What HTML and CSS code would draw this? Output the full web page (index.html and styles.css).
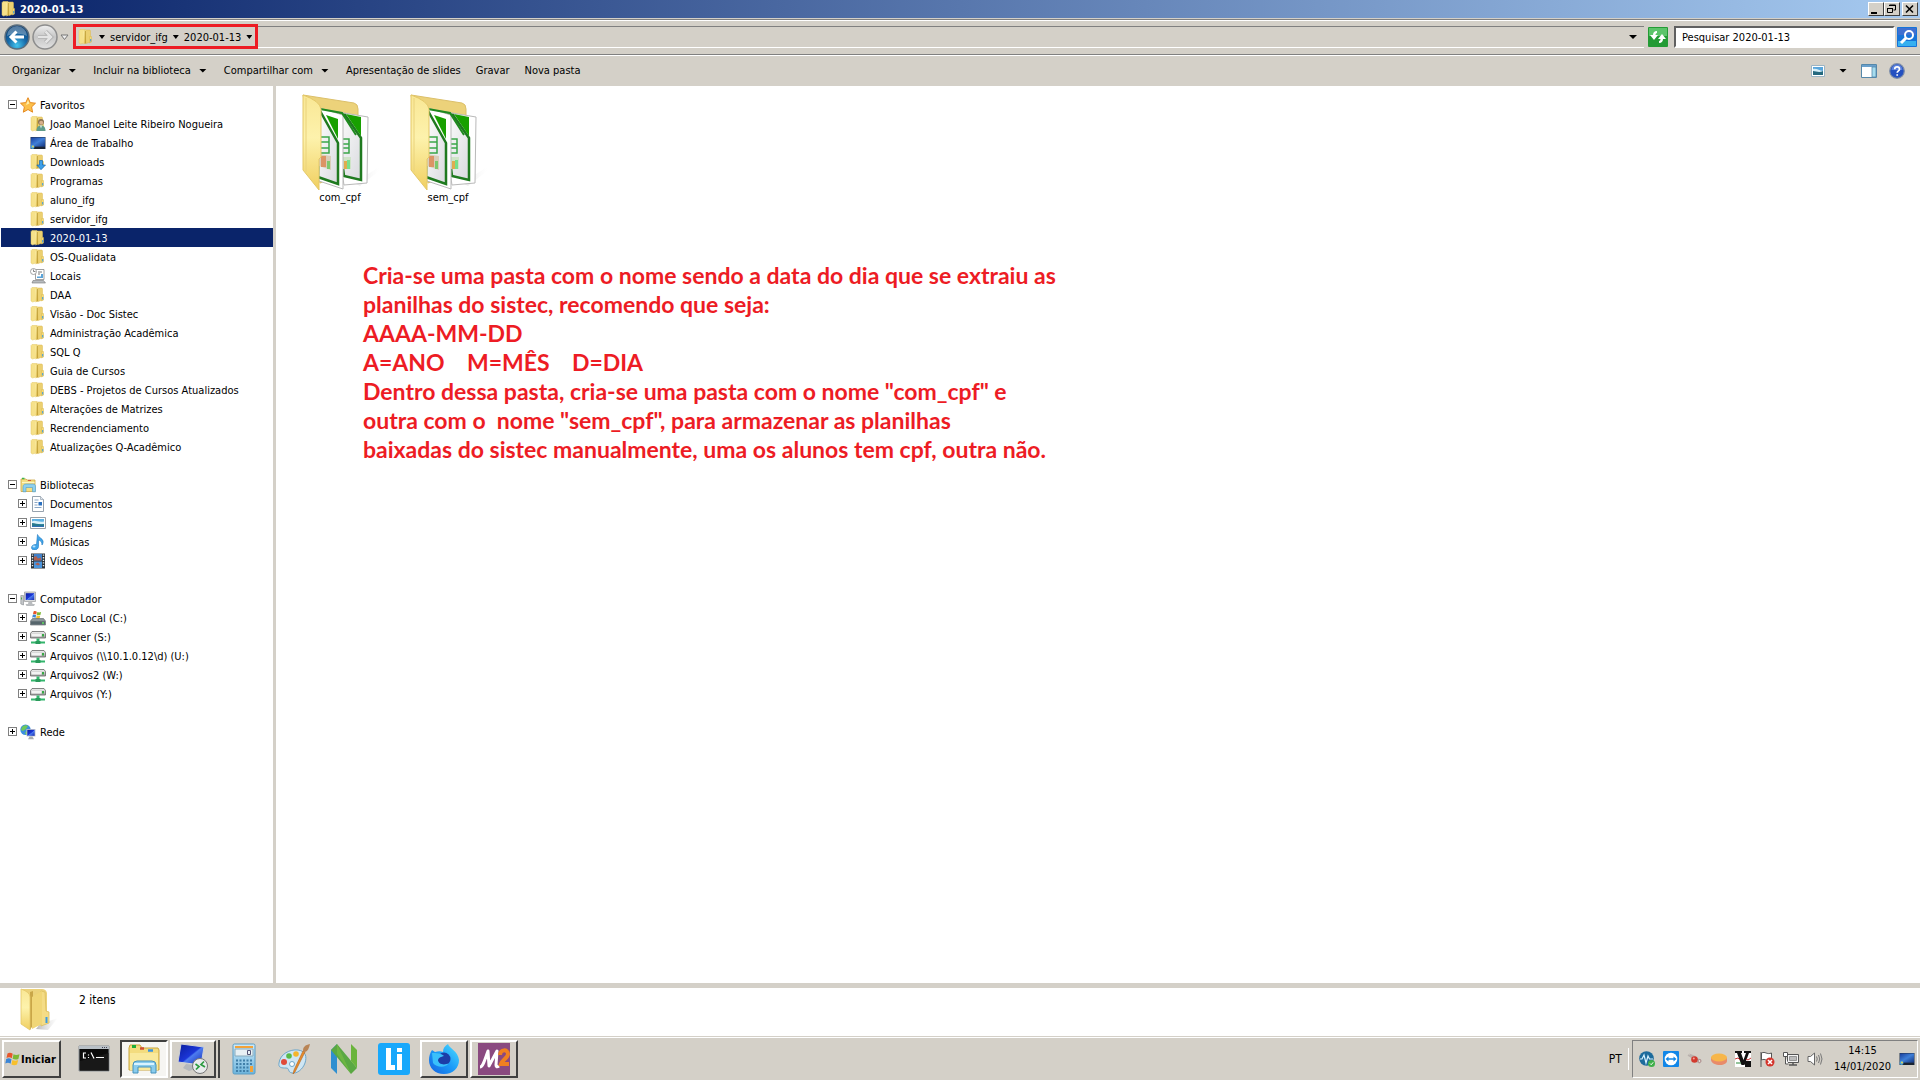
FILE: index.html
```
<!DOCTYPE html>
<html lang="pt-BR">
<head>
<meta charset="utf-8">
<title>2020-01-13</title>
<link rel="stylesheet" href="styles.css">
</head>
<body>
<svg class="sprite" aria-hidden="true">
  <defs>
    <linearGradient id="gold" x1="0" y1="0" x2="1" y2="1"><stop offset="0" stop-color="#fdf3b4"/><stop offset="1" stop-color="#e2b93d"/></linearGradient>
    <linearGradient id="flap" x1="0" y1="0" x2="0" y2="1"><stop offset="0" stop-color="#f9e795"/><stop offset=".45" stop-color="#fdf2ac"/><stop offset="1" stop-color="#f0cf60"/></linearGradient>
    <linearGradient id="screen" x1="0" y1="0" x2="1" y2="1"><stop offset="0" stop-color="#1a3f9c"/><stop offset=".5" stop-color="#3f7fd8"/><stop offset="1" stop-color="#15357f"/></linearGradient>
    <linearGradient id="deep" x1="0" y1="0" x2="1" y2="1"><stop offset="0" stop-color="#0a1c9a"/><stop offset=".5" stop-color="#1b36d8"/><stop offset=".55" stop-color="#4c7cf0"/><stop offset="1" stop-color="#1427b0"/></linearGradient>
    <linearGradient id="metal" x1="0" y1="0" x2="0" y2="1"><stop offset="0" stop-color="#f4f4f4"/><stop offset="1" stop-color="#9a9a9a"/></linearGradient>
    <linearGradient id="paper" x1="0" y1="0" x2="1" y2="1"><stop offset="0" stop-color="#ffffff"/><stop offset="1" stop-color="#d9dade"/></linearGradient>
    <linearGradient id="shade" x1="0" y1="0" x2="1" y2="0"><stop offset="0" stop-color="#999" stop-opacity=".7"/><stop offset="1" stop-color="#ccc" stop-opacity="0"/></linearGradient>
    <radialGradient id="bluebtn" cx=".5" cy=".85" r=".8"><stop offset="0" stop-color="#43c4ee"/><stop offset=".5" stop-color="#1769a8"/><stop offset="1" stop-color="#0c3f73"/></radialGradient>
    <linearGradient id="greybtn" x1="0" y1="0" x2="0" y2="1"><stop offset="0" stop-color="#f0f0f0"/><stop offset=".5" stop-color="#c6c6c6"/><stop offset="1" stop-color="#e2e2e2"/></linearGradient>
    <linearGradient id="aqua" x1="0" y1="0" x2="0" y2="1"><stop offset="0" stop-color="#cdeafa"/><stop offset="1" stop-color="#6db4dc"/></linearGradient>
    <linearGradient id="fox" x1="1" y1="0" x2="0" y2="1"><stop offset="0" stop-color="#4fe0ff"/><stop offset=".5" stop-color="#1b9cf8"/><stop offset="1" stop-color="#1560e0"/></linearGradient>
  </defs>
  <symbol id="i-folder" viewBox="0 0 16 16">
    <path d="M1 1.500 2 .5h5l.5 13-5 1.500L1 14z" fill="#f6e18a" stroke="#e3c765" stroke-width=".5"/>
    <path d="M7 1h5l.5 1v11l-4.500 1.500z" fill="#ecd070" stroke="#dcbb55" stroke-width=".5"/>
    <path d="M5.500 2.500 8 1v13l-2.500 1.500z" fill="url(#gold)"/>
    <path d="M7.300 2v12.500" stroke="#b9972f" stroke-width=".9"/>
    <path d="M11.500 7.500h2v5.500l-2 1z" fill="#f4d975" stroke="#d9b850" stroke-width=".5"/>
    <path d="M12.700 10v2.500" stroke="#3b9be0" stroke-width="1"/>
  </symbol>
  <symbol id="i-user" viewBox="0 0 16 16">
    <use href="#i-folder"/>
    <circle cx="11" cy="6" r="3" fill="#8d7350"/><circle cx="11.200" cy="6.800" r="2" fill="#d8b08c"/>
    <path d="M6.500 15c0-4 2-5.500 4.500-5.500s4.500 1.500 4.500 5.500z" fill="#5f9c8a"/><path d="M10 9.500h2l-1 3z" fill="#e8f0ee"/>
  </symbol>
  <symbol id="i-desk" viewBox="0 0 16 16">
    <path d="M.5 2h15v12H.5z" fill="#23344f"/><path d="M1 2.500h14v9H1z" fill="url(#screen)"/>
    <path d="M1 12h14v2H1z" fill="#1a2433"/><circle cx="2.500" cy="12" r="2" fill="#48a3dd"/><circle cx="3" cy="11.500" r=".9" fill="#f2d64b"/>
  </symbol>
  <symbol id="i-down" viewBox="0 0 16 16">
    <use href="#i-folder"/>
    <path d="M9.500 6.500h3V11H15.500L11 15.700 6.800 11h2.700z" fill="#3da0ea" stroke="#1767ad" stroke-width=".7"/>
  </symbol>
  <symbol id="i-places" viewBox="0 0 16 16">
    <path d="M5.500 1.500H14v10H5.500z" fill="#fff" stroke="#888" stroke-width=".8"/><path d="M7 8.500h4V6h2v4H7z" fill="#5aa3d8"/>
    <path d="M8 4h4M8 6h2" stroke="#777"/><circle cx="3.500" cy="3.500" r="3" fill="#fff" stroke="#999" stroke-width=".9"/><path d="M3.500 1.500v2h2" stroke="#555" stroke-width=".7" fill="none"/>
    <path d="M3 12.500h10.500l2 2.500H2z" fill="#b8bcbf" stroke="#777" stroke-width=".6"/>
  </symbol>
  <symbol id="i-star" viewBox="0 0 16 16">
    <path d="M8 .7 10.200 5.600 15.500 6.200 11.600 9.900 12.600 15.200 8 12.500 3.300 15.200 4.400 9.900.5 6.200 5.800 5.600z" fill="#fcc04a" stroke="#e58a22" stroke-width="1"/>
    <path d="M8 3 9.300 6.500 6 8z" fill="#fff0b0"/>
  </symbol>
  <symbol id="i-lib" viewBox="0 0 16 16">
    <path d="M1 2h5l1 1h8v11.500H1z" fill="#f5df85" stroke="#cda744" stroke-width=".8"/><path d="M2 1.500h2.500" stroke="#3cb54a" stroke-width="1.500"/><path d="M8 3.500h3" stroke="#d2553c"/>
    <path d="M2 5.500h12.500" stroke="#fff6c4"/><path d="M3 14.800V10c0-2 1-3 3-3h7c2 0 2.500 1 2.500 3v4.800h-3V10.500H6v4.300z" fill="#8fd0ee" stroke="#4d9cc8" stroke-width=".6"/>
  </symbol>
  <symbol id="i-doc" viewBox="0 0 16 16">
    <path d="M2.500.5h8l3 3v12h-11z" fill="#fff" stroke="#8a97a5" stroke-width=".9"/><path d="M10.500.5v3h3" fill="#dfe6ee" stroke="#8a97a5" stroke-width=".6"/>
    <path d="M4.500 4h4M4.500 6.500h3M4.500 9h3M4.500 11.500h7" stroke="#6c8fb5" stroke-width=".8"/><path d="M8.500 6H12v3.500H8.500z" fill="#2a70c0"/>
  </symbol>
  <symbol id="i-img" viewBox="0 0 16 16">
    <path d="M.5 2.500h15v11H.5z" fill="#fff" stroke="#8c949c" stroke-width=".9"/><path d="M2 4h12v8H2z" fill="#5cb0e2"/>
    <path d="M2 6.500c3-2 6 1 12 0v2.500H2z" fill="#d9f0f8"/><path d="M2 8c4 0 6 2 12 1v3H2z" fill="#27798f"/><path d="M2 11h12v1H2z" fill="#2f6fb4"/>
  </symbol>
  <symbol id="i-music" viewBox="0 0 16 16">
    <path d="M7.500.5c.5 2.500 5 4 5.500 6.500.3 1.500 0 2.500-1 4 .2-3-1.500-4.500-3.500-5v6.500c0 2-2 3.500-4 3.500S1.500 15 1.500 13.500c0-2 2.500-3.500 5-3z" fill="#3fa5ea" stroke="#1f77bf" stroke-width=".6"/>
    <ellipse cx="4" cy="12.600" rx="1.500" ry="1" fill="#b7e0fa"/>
  </symbol>
  <symbol id="i-video" viewBox="0 0 16 16">
    <path d="M1 .5h14v15H1z" fill="#2b3238"/><path d="M4 1h8v6.500H4z" fill="#4180c9"/><path d="M4 8.500h8V15H4z" fill="#4a95dd"/>
    <path d="M4 4l2-1 2 2.500 3-1v3H4zM5 11l3-1.500 2 2-2 1z" fill="#b0604f"/><path d="M2.500 1.500v13M13.500 1.500v13" stroke="#e8eef2" stroke-width="1.400" stroke-dasharray="1.300 1.300"/>
  </symbol>
  <symbol id="i-pc" viewBox="0 0 16 16">
    <path d="M.8 4.500h2.700V14L.8 13z" fill="#c3c6c9" stroke="#85898d" stroke-width=".6"/><path d="M1.500 6.500v2" stroke="#48a84a"/>
    <path d="M4.500 1h11v9.500h-11z" fill="#d9dbdd" stroke="#999" stroke-width=".7"/><path d="M5.700 2.200h8.600v6.800H5.700z" fill="url(#deep)"/>
    <path d="M8.500 10.500h3.500l.5 2.500H15l-1 2H6.500l-1-2H8z" fill="#b9bcbf"/>
  </symbol>
  <symbol id="i-flag" viewBox="0 0 16 16">
    <path d="M2.500 2.500C4 1.500 6 1.500 7.700 2.800L6.800 7.300C5 6 3.300 6.100 1.500 7z" fill="#e8562a"/>
    <path d="M8.500 3.300c1.800 1 3.600 1 6 0L13.400 8c-2 .8-4 .8-5.800-.2z" fill="#7cb833"/>
    <path d="M1.200 8c1.700-.9 3.500-.9 5.300.2L5.600 12.700C4 11.500 2.200 11.500.3 12.500z" fill="#3c86d6"/>
    <path d="M7.400 8.900c1.800 1 3.700 1 5.800.1L12 13.600c-2 .8-3.800.8-5.600-.2z" fill="#f7c02d"/>
  </symbol>
  <symbol id="i-disk" viewBox="0 0 16 16">
    <svg x="2" y="0" width="10" height="10" viewBox="0 0 16 16"><use href="#i-flag"/></svg>
    <path d="M2.500 8.500h11l2 2.500v4H.5v-4z" fill="#8b9599" stroke="#5a6266" stroke-width=".6"/><path d="M1 11.300h14V14.500H1z" fill="#56656c"/><path d="M12 13h2" stroke="#60e060" stroke-width="1.500"/>
  </symbol>
  <symbol id="i-net" viewBox="0 0 16 16">
    <path d="M2 2.500h12l1.500 2V9H.5V4.500z" fill="url(#metal)" stroke="#666" stroke-width=".8"/><path d="M1.500 5h10v2.500h-10z" fill="#f3f3f3"/><path d="M12 5h2v2.500h-2z" fill="#37a845"/>
    <path d="M6.500 9.500h3v3H15V14.500H1v-2h5.500z" fill="#33b56c"/><path d="M5.500 12h5v3h-5z" fill="#2a9a5b"/>
  </symbol>
  <symbol id="i-web" viewBox="0 0 16 16">
    <circle cx="5.500" cy="5.800" r="5.200" fill="#3b8fdf"/><path d="M2 3c2-2 5-2 6-1L6 5 3 7 1 6zM6 7l3 1-2 3-2-1z" fill="#6fc95b"/>
    <path d="M6.500 5h9v7.500h-9z" fill="#c8ccd0"/><path d="M7.300 5.800h7.400v6H7.300z" fill="url(#deep)"/><path d="M9.500 12.500h3l1.500 2.800H8z" fill="#a9adb1"/>
  </symbol>
  <symbol id="i-bigfolder" viewBox="0 0 80 100">
    <path d="M54 92 79 76v4L60 95z" fill="url(#shade)" opacity=".35"/>
    <path d="M3 4 54 12q4 1 4 6v60L20 92z" fill="#ecd27a" stroke="#dcc06a"/>
    <path d="M32 20 68 26 67 92 44 94z" fill="#fff" stroke="#b9b9b9"/>
    <path d="M36 23 45 24 61 47V89L44 85z" fill="url(#paper)" stroke="#1f7a1f" stroke-width="2.500"/>
    <path d="M46 23 61 26v19z" fill="#18a000"/>
    <path d="M43 48h6v14h-6M43 53h6M43 57h6" stroke="#3aa648" stroke-width="1.500" fill="none"/><path d="M43 66h8v12h-8z" fill="#cfe4c8"/><path d="M44 70h3v8h-3z" fill="#e0ac4e"/><path d="M47 69h3v9h-3z" fill="#77e08a"/>
    <path d="M20 17 43 24V98L19 90z" fill="#fff" stroke="#b9b9b9"/>
    <path d="M19 18 38 52V93L18 86z" fill="url(#paper)" stroke="#1f7a1f" stroke-width="2.500"/>
    <path d="M20 18 42 22 56 44" fill="none" stroke="#1f8a1f" stroke-width="2"/>
    <path d="M26 24 38 28V48z" fill="#18a000"/>
    <path d="M20 46h9v16h-9M20 51h9M20 57h9" stroke="#3aa648" stroke-width="1.500" fill="none"/><path d="M19 63 31 65V79L19 75z" fill="#d9cdb8"/><path d="M21 65h5v11h-5z" fill="#dc9465"/><path d="M27 70h3v8h-3z" fill="#7ec86e"/>
    <path d="M3 4q17 6 18 14V66l-2 2V99L3 79z" fill="url(#flap)" stroke="#e4c868"/>
    <path d="M6 7V81" stroke="#ead27c" stroke-width="1"/>
  </symbol>
  <symbol id="i-plainfolder" viewBox="0 0 40 44">
    <path d="M20 36 38 30 28 42 16 41z" fill="url(#shade)"/>
    <path d="M2 1h20q4 0 5 4v30L9 40z" fill="#ecd27a"/><path d="M26 23l3 1v11l-8 3V3l4 1z" fill="#f4dc86" stroke="#dcbf60" stroke-width=".8"/>
    <path d="M10 4 13 3v34l-3 5z" fill="#c9a648"/><path d="M1 1q9 3 9 8v33L1 36z" fill="url(#flap)" stroke="#e4c868" stroke-width=".8"/><path d="M12 9 22 3V36L12 41z" fill="#f0d677"/>
    <path d="M26.500 29v6" stroke="#3b9be0" stroke-width="2"/>
  </symbol>
</svg>

<div class="window">
  <header class="titlebar">
    <svg class="ico"><use href="#i-folder"/></svg>
    <h1 class="title">2020-01-13</h1>
    <div class="win-buttons">
      <button class="win-btn" aria-label="Minimizar"><svg viewBox="0 0 12 10"><path d="M1 8h6v2H1z"/></svg></button>
      <button class="win-btn" aria-label="Restaurar"><svg viewBox="0 0 12 10"><path d="M3.500 1h6v5h-2M3 1.500h7M1.500 4.500h5v4h-5zM1 4.500h6" fill="none" stroke="#000"/></svg></button>
      <button class="win-btn win-close" aria-label="Fechar"><svg viewBox="0 0 12 10"><path d="M2 1.500 9 8.500M9 1.500 2 8.500" stroke="#000" stroke-width="1.600"/></svg></button>
    </div>
  </header>

  <div class="navbar">
    <button class="round" aria-label="Voltar"><svg viewBox="0 0 26 26"><circle cx="13" cy="13" r="12" fill="url(#bluebtn)" stroke="#5b6d7c" stroke-width="1.500"/><path d="M3 12a10 10 0 0 1 20 0c-6-3-14-3-20 0z" fill="#fff" opacity=".3"/><path d="M20 13H7M12.500 7.500 7 13l5.500 5.500" fill="none" stroke="#fff" stroke-width="3"/></svg></button>
    <button class="round" aria-label="Avançar"><svg viewBox="0 0 26 26"><circle cx="13" cy="13" r="12" fill="url(#greybtn)" stroke="#8d8d8d" stroke-width="1.500"/><path d="M6 13h13M13.500 7.500 19 13l-5.500 5.500" fill="none" stroke="#aaa" stroke-width="4"/><path d="M6 13h13M13.500 7.500 19 13l-5.500 5.500" fill="none" stroke="#e4e4e4" stroke-width="2.500"/></svg></button>
    <button class="recent" aria-label="Páginas recentes"><svg viewBox="0 0 9 7"><path d="M1 1h7L4.500 5.500z" fill="#eee" stroke="#777"/></svg></button>
    <nav class="address" aria-label="Endereço">
      <svg class="ico"><use href="#i-folder"/></svg>
      <span class="caret"></span>
      <a href="#servidor">servidor_ifg</a><span class="caret"></span>
      <a href="#data">2020-01-13</a><span class="caret"></span>
      <span class="highlight"></span>
      <button class="history" aria-label="Locais anteriores"><span class="caret"></span></button>
    </nav>
    <button class="refresh" aria-label="Atualizar"><svg viewBox="0 0 20 20"><rect width="20" height="20" rx="1" fill="#249b35"/><path d="M1 1h18v8H1z" fill="#5cc46a"/><path d="M9 4C6 4 5 6 5 8H2l4 5 4-5H7.500c0-1 .5-2 1.500-2zM11 16c3 0 4-2 4-4h3l-4-5-4 5h2.500c0 1-.5 2-1.500 2z" fill="#fff"/></svg></button>
    <input class="search" type="text" aria-label="Pesquisar" value="Pesquisar 2020-01-13">
    <button class="go" aria-label="Buscar"><svg viewBox="0 0 20 20"><rect width="20" height="20" rx="1" fill="#1673d8"/><path d="M1 1h18v7H1z" fill="#3f6fd0"/><path d="M1 14h18v5H1z" fill="#37b0f0"/><circle cx="12" cy="8" r="4" fill="none" stroke="#fff" stroke-width="2"/><path d="M9 11 4 16" stroke="#fff" stroke-width="3"/></svg></button>
  </div>

  <div class="toolbar">
    <button class="tool">Organizar<span class="caret"></span></button>
    <button class="tool">Incluir na biblioteca<span class="caret"></span></button>
    <button class="tool">Compartilhar com<span class="caret"></span></button>
    <button class="tool">Apresentação de slides</button>
    <button class="tool">Gravar</button>
    <button class="tool">Nova pasta</button>
    <div class="tool-icons">
      <button class="tool-icon" aria-label="Alterar o modo de exibição"><svg class="view-ico" viewBox="0 0 14 12"><path d="M.5.500h13v11H.5z" fill="#fff" stroke="#9bb4c4"/><path d="M2 2h10v8H2z" fill="#5aa6dc"/><path d="M2 4c4-1 6 2 10 2v1H2z" fill="#d5eef8"/><path d="M2 6c3 0 6 2 10 0v4H2z" fill="#24697f"/></svg></button>
      <button class="tool-icon" aria-label="Mais opções"><span class="caret"></span></button>
      <button class="tool-icon pane" aria-label="Painel de visualização"><svg class="ico" viewBox="0 0 16 16"><path d="M.5 1.500h15v13H.5z" fill="#fff" stroke="#58a"/><path d="M1 2h14v2H1z" fill="#6aa0cc"/><path d="M11 4h4v10h-4z" fill="#a6dcee" stroke="#58a" stroke-width=".8"/></svg></button>
      <button class="tool-icon" aria-label="Ajuda"><svg class="ico" viewBox="0 0 16 16"><circle cx="8" cy="8" r="7.300" fill="#2450c0" stroke="#7d8da8" stroke-width="1.200"/><path d="M2.500 7a5.500 5.500 0 0 1 11 0z" fill="#5a80dc"/><path d="M5.700 6.200c0-3 4.800-3 4.800 0 0 1.700-2.300 1.800-2.300 3.600M8.200 11.200v1.600" fill="none" stroke="#fff" stroke-width="1.700"/></svg></button>
    </div>
  </div>

  <main class="content">
    <nav class="tree" aria-label="Pastas">
      <ul class="group">
        <li class="row root"><button class="exp minus" aria-label="Recolher"></button><a href="#f"><svg class="ico"><use href="#i-star"/></svg>Favoritos</a></li>
        <li class="row"><a href="#f"><svg class="ico"><use href="#i-user"/></svg>Joao Manoel Leite Ribeiro Nogueira</a></li>
        <li class="row"><a href="#f"><svg class="ico"><use href="#i-desk"/></svg>Área de Trabalho</a></li>
        <li class="row"><a href="#f"><svg class="ico"><use href="#i-down"/></svg>Downloads</a></li>
        <li class="row"><a href="#f"><svg class="ico"><use href="#i-folder"/></svg>Programas</a></li>
        <li class="row"><a href="#f"><svg class="ico"><use href="#i-folder"/></svg>aluno_ifg</a></li>
        <li class="row"><a href="#f"><svg class="ico"><use href="#i-folder"/></svg>servidor_ifg</a></li>
        <li class="row selected"><a href="#f"><svg class="ico"><use href="#i-folder"/></svg>2020-01-13</a></li>
        <li class="row"><a href="#f"><svg class="ico"><use href="#i-folder"/></svg>OS-Qualidata</a></li>
        <li class="row"><a href="#f"><svg class="ico"><use href="#i-places"/></svg>Locais</a></li>
        <li class="row"><a href="#f"><svg class="ico"><use href="#i-folder"/></svg>DAA</a></li>
        <li class="row"><a href="#f"><svg class="ico"><use href="#i-folder"/></svg>Visão - Doc Sistec</a></li>
        <li class="row"><a href="#f"><svg class="ico"><use href="#i-folder"/></svg>Administração Acadêmica</a></li>
        <li class="row"><a href="#f"><svg class="ico"><use href="#i-folder"/></svg>SQL Q</a></li>
        <li class="row"><a href="#f"><svg class="ico"><use href="#i-folder"/></svg>Guia de Cursos</a></li>
        <li class="row"><a href="#f"><svg class="ico"><use href="#i-folder"/></svg>DEBS - Projetos de Cursos Atualizados</a></li>
        <li class="row"><a href="#f"><svg class="ico"><use href="#i-folder"/></svg>Alterações de Matrizes</a></li>
        <li class="row"><a href="#f"><svg class="ico"><use href="#i-folder"/></svg>Recrendenciamento</a></li>
        <li class="row"><a href="#f"><svg class="ico"><use href="#i-folder"/></svg>Atualizações Q-Acadêmico</a></li>
      </ul>
      <ul class="group">
        <li class="row root"><button class="exp minus" aria-label="Recolher"></button><a href="#b"><svg class="ico"><use href="#i-lib"/></svg>Bibliotecas</a></li>
        <li class="row"><button class="exp plus" aria-label="Expandir"></button><a href="#b"><svg class="ico"><use href="#i-doc"/></svg>Documentos</a></li>
        <li class="row"><button class="exp plus" aria-label="Expandir"></button><a href="#b"><svg class="ico"><use href="#i-img"/></svg>Imagens</a></li>
        <li class="row"><button class="exp plus" aria-label="Expandir"></button><a href="#b"><svg class="ico"><use href="#i-music"/></svg>Músicas</a></li>
        <li class="row"><button class="exp plus" aria-label="Expandir"></button><a href="#b"><svg class="ico"><use href="#i-video"/></svg>Vídeos</a></li>
      </ul>
      <ul class="group">
        <li class="row root"><button class="exp minus" aria-label="Recolher"></button><a href="#c"><svg class="ico"><use href="#i-pc"/></svg>Computador</a></li>
        <li class="row"><button class="exp plus" aria-label="Expandir"></button><a href="#c"><svg class="ico"><use href="#i-disk"/></svg>Disco Local (C:)</a></li>
        <li class="row"><button class="exp plus" aria-label="Expandir"></button><a href="#c"><svg class="ico"><use href="#i-net"/></svg>Scanner (S:)</a></li>
        <li class="row"><button class="exp plus" aria-label="Expandir"></button><a href="#c"><svg class="ico"><use href="#i-net"/></svg>Arquivos (\\10.1.0.12\d) (U:)</a></li>
        <li class="row"><button class="exp plus" aria-label="Expandir"></button><a href="#c"><svg class="ico"><use href="#i-net"/></svg>Arquivos2 (W:)</a></li>
        <li class="row"><button class="exp plus" aria-label="Expandir"></button><a href="#c"><svg class="ico"><use href="#i-net"/></svg>Arquivos (Y:)</a></li>
      </ul>
      <ul class="group">
        <li class="row root"><button class="exp plus" aria-label="Expandir"></button><a href="#r"><svg class="ico"><use href="#i-web"/></svg>Rede</a></li>
      </ul>
    </nav>

    <section class="files">
      <div class="items">
        <a class="item" href="#com"><svg><use href="#i-bigfolder"/></svg>com_cpf</a>
        <a class="item" href="#sem"><svg><use href="#i-bigfolder"/></svg>sem_cpf</a>
      </div>
      <p class="note">Cria-se uma pasta com o nome sendo a data do dia que se extraiu as
planilhas do sistec, recomendo que seja:
AAAA-MM-DD
A=ANO    M=MÊS    D=DIA
Dentro dessa pasta, cria-se uma pasta com o nome "com_cpf" e
outra com o  nome "sem_cpf", para armazenar as planilhas
baixadas do sistec manualmente, uma os alunos tem cpf, outra não.</p>
    </section>
  </main>

  <footer class="details">
    <svg class="details-ico"><use href="#i-plainfolder"/></svg>
    <p class="details-text">2 itens</p>
  </footer>

  <div class="taskbar">
    <button class="start"><svg viewBox="0 0 16 16"><use href="#i-flag"/></svg>Iniciar</button>
    <div class="apps">
      <button class="app" aria-label="Prompt de comando"><svg viewBox="0 0 32 32"><path d="M1 3h30v25H1z" fill="#0a0a0a" stroke="#8d9398"/><path d="M1 3h30v3H1z" fill="#b9c0c6"/><path d="M24 4.500h6" stroke="#445" stroke-dasharray="1 1"/><path d="M2 18 31 10V28H2z" fill="#222" opacity=".6"/><path d="M8 10H5.500v5H8M10.500 11.500v1M10.500 14v1M13 9.500l3 6M18 14.500h8" stroke="#fff" fill="none" stroke-width="1.200"/></svg></button>
      <button class="app active" aria-label="Windows Explorer"><svg viewBox="0 0 32 32"><path d="M1 5 2 2h10l2 3h16l1 2v20H1z" fill="#f3dc7e" stroke="#c9a53f"/><path d="M4 3.500h4" stroke="#1fae3a" stroke-width="3"/><path d="M12 5.500h4" stroke="#d34e33" stroke-width="2.500"/><path d="M20 7.500h5" stroke="#3c93dc" stroke-width="2.500"/><path d="M2 10h28v17H2z" fill="#f9e99c"/><path d="M5 30V22q0-4 4-4h15q4 0 4 4v8h-5v-6H10v6z" fill="#8accec" stroke="#4591bd"/><path d="M6 21h20" stroke="#d9f3ff" stroke-width="2"/></svg></button>
      <button class="app open stacked" aria-label="Área de Trabalho Remota"><svg viewBox="0 0 32 32"><path d="M4 1 27 4 24 22 1 19z" fill="url(#deep)" stroke="#cfd2d6"/><path d="M9 21l8 1 1 4-6 2-6-3z" fill="#b4b8bc"/><circle cx="23" cy="23" r="7.500" fill="#e9ebec" stroke="#777"/><path d="M18.500 21l3.500 2.500-3 3M27 18.500 24 21.500l4 2.500" fill="none" stroke="#2b9b40" stroke-width="1.700"/></svg></button>
      <button class="app" aria-label="Calculadora"><svg viewBox="0 0 32 32"><rect x="5" y="1" width="22" height="30" rx="1.500" fill="url(#aqua)" stroke="#5a9cc4"/><path d="M7 3h18v2H7z" fill="#f2a23a"/><path d="M7 6h18v7H7z" fill="#e8f0f4" stroke="#8ab"/><path d="M19.500 7.500h3v4h-3z" fill="none" stroke="#557"/><path d="M8 17.500h16M8 21h16M8 24.500h16M8 28h16" stroke="#3f7ea8" stroke-width="2" stroke-dasharray="2 1.500"/><path d="M22 23h3v6h-3z" fill="#f2a23a"/></svg></button>
      <button class="app" aria-label="Paint"><svg viewBox="0 0 32 32"><path d="M1 20C2 11 12 6 20 7s9 7 7 13-8 11-13 10-2-5-6-5-8 0-7-5z" fill="#cfe6f4" stroke="#6fa6c8"/><circle cx="6" cy="19" r="3" fill="#e04a3a"/><circle cx="11" cy="13" r="2.800" fill="#57b947"/><circle cx="18" cy="11" r="2.800" fill="#f5b52c"/><circle cx="14" cy="21" r="2.500" fill="#fff" stroke="#6fa6c8"/><path d="M27 9 17 29l-2 2 1-4L25 8z" fill="#e88d2c" stroke="#b3621a" stroke-width=".6"/><path d="M25 8c0-4 2-6 7-7-1 4-2 7-5 8z" fill="#b98455"/></svg></button>
      <button class="app" aria-label="Neovim"><svg viewBox="0 0 32 32"><path d="M3 7 9 1V31L3 25z" fill="#2f8fd0"/><path d="M9 1 29 25l-6 6L3 7z" fill="#5aa843"/><path d="M9 1 23 31 9 11z" fill="#7cc043" opacity=".6"/><path d="M23 1l6 6v18l-6-7z" fill="#6ab43c"/></svg></button>
      <button class="app" aria-label="Li"><svg viewBox="0 0 32 32"><rect width="32" height="32" rx="3" fill="#18a8fb"/><path d="M8 5h5v17h4v5H8zM19 11h5v16h-5zM19 5h5v4h-5z" fill="#fff"/></svg></button>
      <button class="app open" aria-label="Firefox"><svg viewBox="0 0 32 32"><path d="M4 7l3 2c3-1 6-1 8 0 0-4 2-6 5-8 1 4 10 7 11 16 0 8-6 14-15 14S1 25 1 17c0-4 1-7 3-10z" fill="url(#fox)"/><circle cx="16" cy="16" r="6.500" fill="#1c3da8"/><path d="M4 10c4 0 9 0 12 3-3 1-5 1-6 4 0 4 6 6 11 3-3 5-12 5-16 0z" fill="#39c0fb"/></svg></button>
      <button class="app open" aria-label="M2"><svg viewBox="0 0 32 32"><path d="M0 0h32v32H0z" fill="#8a4a80"/><path d="M2 24c3 0 5-8 8-16l1 15 8-15-1 14q0 3 3 1" fill="none" stroke="#fff" stroke-width="3" stroke-linejoin="round"/><path d="M22 12c0-6 8-6 8-1 0 4-6 6-7 10h8" fill="none" stroke="#f08020" stroke-width="4"/></svg></button>
    </div>
    <button class="lang">PT</button>
    <div class="tray">
      <svg class="ico" viewBox="0 0 16 16"><circle cx="7.500" cy="7.500" r="7.300" fill="#1d6b9c"/><path d="M1 8h2l2-4 2 8 2-7 1.500 3H14" fill="none" stroke="#d9f2ff" stroke-width="1.200"/><circle cx="12.500" cy="12.500" r="3.500" fill="#3fb04a"/><path d="M11 12.500l1.200 1.200 2-2.400" stroke="#fff" fill="none"/></svg>
      <svg class="ico" viewBox="0 0 16 16"><rect width="16" height="16" rx="1" fill="#1287e8"/><circle cx="8" cy="8" r="6.300" fill="#fff"/><path d="M2.500 8l3-2.500v1.700h5V5.500l3 2.500-3 2.500V8.800h-5v1.700z" fill="#1287e8"/></svg>
      <svg class="ico" viewBox="0 0 16 16"><path d="M1 4l5 3-2-3 5 2M14 9l-4-1 3 4-4-2" stroke="#b9b1ad" stroke-width="1.500" fill="none"/><circle cx="7.500" cy="8.500" r="3.300" fill="#d23a2e"/><circle cx="6.800" cy="7.500" r="1" fill="#f6a59c"/><circle cx="12.500" cy="10" r="1.500" fill="#e9dcd6" stroke="#a88"/></svg>
      <svg class="ico" viewBox="0 0 16 16"><path d="M0 6v3c0 3 5 5 9 5s7-2 7-4V7z" fill="#e88b6a"/><ellipse cx="8" cy="6.500" rx="8" ry="4" fill="#f7b64a"/></svg>
      <svg class="ico" viewBox="0 0 16 16"><path d="M0 0h16v16H0z" fill="#fff"/><path d="M0 0h7v2H6l2.500 7L11 2h-2V0h7v2h-2L9.500 14h-3L2 2H0z" fill="#111"/><path d="M0 8l3-1 2 2M11 8l2 1 3-2" stroke="#c33" fill="none"/><path d="M10 10h6v6h-6z" fill="#111"/><path d="M1 12h5" stroke="#2a8a3a"/></svg>
      <svg class="ico" viewBox="0 0 16 16"><path d="M2 1v15M2.500 2c4-2 5 2 10 0v7c-5 2-6-2-10 0z" fill="#fff" stroke="#555"/><circle cx="11" cy="11" r="4.500" fill="#d4352c"/><path d="M9 9l4 4M13 9l-4 4" stroke="#fff" stroke-width="1.600"/></svg>
      <svg class="ico" viewBox="0 0 16 16"><path d="M4.500 3.500h11v8h-11z" fill="#f4f4f4" stroke="#555"/><path d="M6.500 5.500h7v4h-7z" fill="#bbb" stroke="#777" stroke-width=".7"/><path d="M6 14h8M10 12v2" stroke="#555" stroke-width="1.500"/><path d="M.5 1.500h4v4h-4zM2.500 6v7h3" fill="#fff" stroke="#555"/></svg>
      <svg class="ico" viewBox="0 0 16 16"><path d="M1 5.500h2.500L7.500 2v12l-4-3.500H1z" fill="#fff" stroke="#666"/><path d="M9.500 5.500q1.500 2.500 0 5M11.500 4q2.500 4 0 8M13.500 2.500q3 5.500 0 11" fill="none" stroke="#777"/></svg>
      <time class="clock" datetime="2020-01-14T14:15">14:15<br>14/01/2020</time>
      <svg class="ico"><use href="#i-desk"/></svg>
    </div>
  </div>
</div>
</body>
</html>
```
FILE: styles.css
```
* { box-sizing: border-box; }

body {
  margin: 0;
  background: #d4d0c8;
  color: #000;
  font: 11px/13px "DejaVu Sans Condensed", "DejaVu Sans", sans-serif;
}

button { padding: 0; border: 0; background: none; color: inherit; font: inherit; }
svg { display: block; flex: none; }
a { color: inherit; text-decoration: none; }
ul, p, h1 { margin: 0; padding: 0; list-style: none; }

.sprite { position: absolute; width: 0; height: 0; }
.ico { width: 16px; height: 16px; }
.window { display: flex; flex-direction: column; min-height: 100vh; }

.caret {
  display: block;
  flex: none;
  width: 8px;
  height: 4px;
  background: #000;
  clip-path: polygon(0 0, 100% 0, 50% 100%);
}

/* Title bar */
.titlebar {
  display: flex;
  align-items: center;
  gap: 3px;
  height: 18px;
  padding: 0 2px 0 1px;
  background: linear-gradient(to right, #0a246a, #a6caf0);
}
.title { flex: 1; color: #fff; font-size: 11px; font-weight: bold; }
.win-buttons { display: flex; }
.win-btn {
  width: 16px;
  height: 14px;
  padding: 1px;
  border: 1px solid;
  border-color: #fff #404040 #404040 #fff;
  background: #d4d0c8;
}
.win-btn svg { width: 12px; height: 10px; }
.win-close { margin-left: 2px; }

/* Navigation bar */
.navbar {
  display: flex;
  align-items: center;
  height: 36px;
  margin-top: 1px;
  padding: 0 3px 0 4px;
  border-top: 1px solid #808080;
  border-bottom: 1px solid #808080;
  box-shadow: inset 0 1px #fff, 0 1px #fff;
}
.round { width: 26px; height: 26px; margin-right: 2px; }
.round svg { width: 26px; height: 26px; }
.recent { width: 9px; margin-right: 9px; }
.recent svg { width: 9px; height: 7px; }
.address {
  position: relative;
  display: flex;
  flex: 1;
  align-items: center;
  gap: 5px;
  height: 22px;
  padding-right: 7px;
  border-top: 1px solid #808080;
  border-bottom: 1px solid #fff;
}
.address > .caret { width: 6px; }
.highlight {
  position: absolute;
  top: -3px;
  left: -5px;
  width: 185px;
  height: 25px;
  border: 3px solid #ed1c24;
}
.history { margin-left: auto; }
.refresh, .go { width: 20px; height: 20px; }
.refresh { margin: 0 6px 0 4px; }
.refresh svg, .go svg { width: 20px; height: 20px; }
.go { margin-left: 2px; }
.search {
  width: 221px;
  height: 22px;
  padding: 0 6px;
  border: 2px solid;
  border-color: #606060 #fff #fff #606060;
  background: #fff;
  font: inherit;
}

/* Toolbar */
.toolbar {
  display: flex;
  align-items: center;
  gap: 15px;
  height: 31px;
  padding: 0 15px 0 12px;
}
.tool { display: flex; align-items: center; gap: 8px; }
.tool:has(.caret) { margin-right: 2px; }
.tool-icons { display: flex; align-items: center; gap: 14px; margin-left: auto; }
.tool-icon.pane { margin-right: -2px; }
.view-ico { width: 14px; height: 12px; }

/* Content */
.content { display: flex; flex: 1; background: #fff; border-bottom: 5px solid #d4d0c8; }
.tree { width: 276px; padding: 9px 0 0 1px; border-right: 3px solid #d4d0c8; }
.group { margin-bottom: 19px; }
.row {
  display: grid;
  grid-template-columns: 9px 1fr;
  align-items: center;
  gap: 3px;
  height: 19px;
  padding-left: 17px;
}
.row.root { padding-left: 7px; }
.row a {
  display: flex;
  grid-column: 2;
  align-items: center;
  gap: 4px;
  padding-top: 1px;
  white-space: nowrap;
}
.selected { background: #0a246a; color: #fff; }
.exp {
  width: 9px;
  height: 9px;
  border: 1px solid #808080;
  background: linear-gradient(#000, #000) center / 5px 1px no-repeat #fff;
}
.exp.plus {
  background:
    linear-gradient(#000, #000) center / 5px 1px no-repeat,
    linear-gradient(#000, #000) center / 1px 5px no-repeat,
    #fff;
}

/* File area */
.files { flex: 1; padding: 5px 24px; }
.items { display: flex; gap: 28px; }
.item { display: flex; flex-direction: column; align-items: center; width: 80px; }
.item svg { width: 80px; height: 100px; }
.note {
  margin: 57px 0 0 63px;
  color: #ed1c24;
  font: bold 23px/29px Lato, sans-serif;
  white-space: pre-wrap;
}

/* Details pane */
.details { display: flex; height: 48px; padding-left: 20px; background: #fff; }
.details-ico { width: 40px; height: 44px; }
.details-text { padding: 5px 0 0 19px; font-size: 12px; line-height: 15px; }

/* Taskbar */
.taskbar {
  display: flex;
  align-items: center;
  height: 44px;
  padding: 2px 2px 0;
  box-shadow: inset 0 1px #d4d0c8, inset 0 2px #fff;
}
.start {
  display: flex;
  align-items: center;
  width: 59px;
  height: 38px;
  padding-left: 1px;
  border: 2px solid;
  border-color: #fff #404040 #404040 #fff;
  font-weight: bold;
}
.start svg { width: 16px; height: 16px; }
.apps { display: flex; flex: 1; gap: 2px; margin-left: 9px; }
.app {
  display: grid;
  place-items: center;
  width: 48px;
  height: 38px;
  border: 2px solid transparent;
}
.app svg { width: 32px; height: 32px; }
.app.open { border-color: #fff #404040 #404040 #fff; }
.app.active { border-color: #404040 #fff #fff #404040; background: #f6f5f2; }
.app.stacked { width: 46px; margin-right: 2px; box-shadow: 2px 0 #d4d0c8, 4px 0 #404040; }
.lang { padding: 0 6px; border-right: 1px solid #fff; line-height: 22px; font-size: 12px; }
.tray {
  display: flex;
  align-items: center;
  gap: 8px;
  height: 38px;
  margin-left: 3px;
  padding: 0 2px 0 6px;
  border: 1px solid;
  border-color: #808080 #fff #fff #808080;
}
.clock { padding-left: 3px; font-size: 11px; line-height: 16px; text-align: center; }
```
